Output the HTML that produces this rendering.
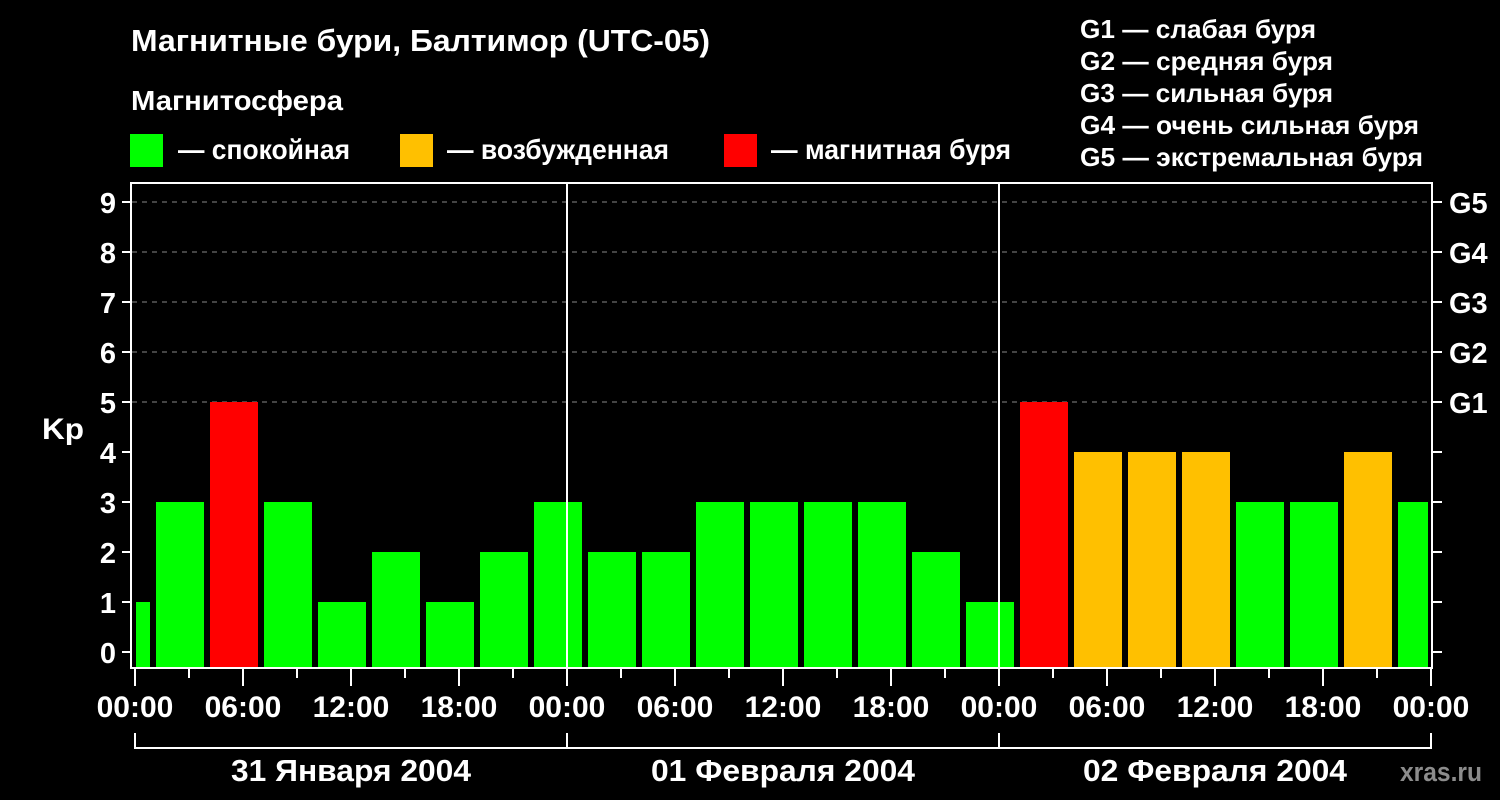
<!DOCTYPE html>
<html><head><meta charset="utf-8"><style>
html,body{margin:0;padding:0;background:#000;}
svg{display:block}
text{font-family:"Liberation Sans",Arial,sans-serif;font-weight:bold;fill:#fff}
</style></head><body>
<svg width="1500" height="800" viewBox="0 0 1500 800" xmlns="http://www.w3.org/2000/svg">
<rect width="1500" height="800" fill="#000"/>
<text x="131" y="51" font-size="31" textLength="579" lengthAdjust="spacingAndGlyphs">Магнитные бури, Балтимор (UTC-05)</text>
<text x="131" y="110" font-size="28" textLength="212" lengthAdjust="spacingAndGlyphs">Магнитосфера</text>
<rect x="130" y="134" width="33" height="33" fill="#00ff00"/>
<text x="178" y="159" font-size="28" textLength="172" lengthAdjust="spacingAndGlyphs">— спокойная</text>
<rect x="400" y="134" width="33" height="33" fill="#ffc000"/>
<text x="447" y="159" font-size="28" textLength="222" lengthAdjust="spacingAndGlyphs">— возбужденная</text>
<rect x="724" y="134" width="33" height="33" fill="#ff0000"/>
<text x="771" y="159" font-size="28" textLength="240" lengthAdjust="spacingAndGlyphs">— магнитная буря</text>
<g font-size="26">
<text x="1080" y="38" textLength="236" lengthAdjust="spacingAndGlyphs">G1 — слабая буря</text>
<text x="1080" y="70" textLength="253" lengthAdjust="spacingAndGlyphs">G2 — средняя буря</text>
<text x="1080" y="102" textLength="253" lengthAdjust="spacingAndGlyphs">G3 — сильная буря</text>
<text x="1080" y="134" textLength="339" lengthAdjust="spacingAndGlyphs">G4 — очень сильная буря</text>
<text x="1080" y="166" textLength="343" lengthAdjust="spacingAndGlyphs">G5 — экстремальная буря</text>
</g>
<g stroke="#888" stroke-width="1" stroke-dasharray="5,5">
<line x1="132" y1="202" x2="1432" y2="202"/><line x1="132" y1="252" x2="1432" y2="252"/>
<line x1="132" y1="302" x2="1432" y2="302"/><line x1="132" y1="352" x2="1432" y2="352"/>
<line x1="132" y1="402" x2="1432" y2="402"/>
</g>
<rect x="136" y="602" width="14" height="66" fill="#00ff00"/>
<rect x="156" y="502" width="48" height="166" fill="#00ff00"/>
<rect x="210" y="402" width="48" height="266" fill="#ff0000"/>
<rect x="264" y="502" width="48" height="166" fill="#00ff00"/>
<rect x="318" y="602" width="48" height="66" fill="#00ff00"/>
<rect x="372" y="552" width="48" height="116" fill="#00ff00"/>
<rect x="426" y="602" width="48" height="66" fill="#00ff00"/>
<rect x="480" y="552" width="48" height="116" fill="#00ff00"/>
<rect x="534" y="502" width="48" height="166" fill="#00ff00"/>
<rect x="588" y="552" width="48" height="116" fill="#00ff00"/>
<rect x="642" y="552" width="48" height="116" fill="#00ff00"/>
<rect x="696" y="502" width="48" height="166" fill="#00ff00"/>
<rect x="750" y="502" width="48" height="166" fill="#00ff00"/>
<rect x="804" y="502" width="48" height="166" fill="#00ff00"/>
<rect x="858" y="502" width="48" height="166" fill="#00ff00"/>
<rect x="912" y="552" width="48" height="116" fill="#00ff00"/>
<rect x="966" y="602" width="48" height="66" fill="#00ff00"/>
<rect x="1020" y="402" width="48" height="266" fill="#ff0000"/>
<rect x="1074" y="452" width="48" height="216" fill="#ffc000"/>
<rect x="1128" y="452" width="48" height="216" fill="#ffc000"/>
<rect x="1182" y="452" width="48" height="216" fill="#ffc000"/>
<rect x="1236" y="502" width="48" height="166" fill="#00ff00"/>
<rect x="1290" y="502" width="48" height="166" fill="#00ff00"/>
<rect x="1344" y="452" width="48" height="216" fill="#ffc000"/>
<rect x="1398" y="502" width="30" height="166" fill="#00ff00"/>
<g stroke="#fff" stroke-width="2" fill="none">
<rect x="131" y="183" width="1301" height="485"/>
<line x1="567" y1="183" x2="567" y2="668"/>
<line x1="999" y1="183" x2="999" y2="668"/>
</g>
<g stroke="#fff" stroke-width="2">
<line x1="122" y1="202" x2="131" y2="202"/><line x1="122" y1="252" x2="131" y2="252"/>
<line x1="122" y1="302" x2="131" y2="302"/><line x1="122" y1="352" x2="131" y2="352"/>
<line x1="122" y1="402" x2="131" y2="402"/><line x1="122" y1="452" x2="131" y2="452"/>
<line x1="122" y1="502" x2="131" y2="502"/><line x1="122" y1="552" x2="131" y2="552"/>
<line x1="122" y1="602" x2="131" y2="602"/><line x1="122" y1="652" x2="131" y2="652"/>
<line x1="1432" y1="202" x2="1442" y2="202"/><line x1="1432" y1="252" x2="1442" y2="252"/>
<line x1="1432" y1="302" x2="1442" y2="302"/><line x1="1432" y1="352" x2="1442" y2="352"/>
<line x1="1432" y1="402" x2="1442" y2="402"/><line x1="1432" y1="452" x2="1442" y2="452"/>
<line x1="1432" y1="502" x2="1442" y2="502"/><line x1="1432" y1="552" x2="1442" y2="552"/>
<line x1="1432" y1="602" x2="1442" y2="602"/><line x1="1432" y1="652" x2="1442" y2="652"/>
<line x1="135" y1="668" x2="135" y2="686"/><line x1="243" y1="668" x2="243" y2="686"/>
<line x1="351" y1="668" x2="351" y2="686"/><line x1="459" y1="668" x2="459" y2="686"/>
<line x1="567" y1="668" x2="567" y2="686"/><line x1="675" y1="668" x2="675" y2="686"/>
<line x1="783" y1="668" x2="783" y2="686"/><line x1="891" y1="668" x2="891" y2="686"/>
<line x1="999" y1="668" x2="999" y2="686"/><line x1="1107" y1="668" x2="1107" y2="686"/>
<line x1="1215" y1="668" x2="1215" y2="686"/><line x1="1323" y1="668" x2="1323" y2="686"/>
<line x1="1431" y1="668" x2="1431" y2="686"/>
<line x1="189" y1="668" x2="189" y2="678"/><line x1="297" y1="668" x2="297" y2="678"/>
<line x1="405" y1="668" x2="405" y2="678"/><line x1="513" y1="668" x2="513" y2="678"/>
<line x1="621" y1="668" x2="621" y2="678"/><line x1="729" y1="668" x2="729" y2="678"/>
<line x1="837" y1="668" x2="837" y2="678"/><line x1="945" y1="668" x2="945" y2="678"/>
<line x1="1053" y1="668" x2="1053" y2="678"/><line x1="1161" y1="668" x2="1161" y2="678"/>
<line x1="1269" y1="668" x2="1269" y2="678"/><line x1="1377" y1="668" x2="1377" y2="678"/>
<line x1="135" y1="733" x2="135" y2="748"/><line x1="567" y1="733" x2="567" y2="748"/>
<line x1="999" y1="733" x2="999" y2="748"/><line x1="1431" y1="733" x2="1431" y2="748"/>
<line x1="134" y1="748" x2="1432" y2="748"/>
</g>
<g font-size="29" text-anchor="end">
<text x="116" y="213">9</text><text x="116" y="263">8</text><text x="116" y="313">7</text>
<text x="116" y="363">6</text><text x="116" y="413">5</text><text x="116" y="463">4</text>
<text x="116" y="513">3</text><text x="116" y="563">2</text><text x="116" y="613">1</text>
<text x="116" y="663">0</text>
</g>
<text x="42" y="439" font-size="30" textLength="42" lengthAdjust="spacingAndGlyphs">Kp</text>
<g font-size="29">
<text x="1449" y="213">G5</text><text x="1449" y="263">G4</text><text x="1449" y="313">G3</text>
<text x="1449" y="363">G2</text><text x="1449" y="413">G1</text>
</g>
<g font-size="30" text-anchor="middle">
<text x="135" y="717">00:00</text><text x="243" y="717">06:00</text><text x="351" y="717">12:00</text>
<text x="459" y="717">18:00</text><text x="567" y="717">00:00</text><text x="675" y="717">06:00</text>
<text x="783" y="717">12:00</text><text x="891" y="717">18:00</text><text x="999" y="717">00:00</text>
<text x="1107" y="717">06:00</text><text x="1215" y="717">12:00</text><text x="1323" y="717">18:00</text>
<text x="1431" y="717">00:00</text>
</g>
<g font-size="31" text-anchor="middle">
<text x="351" y="781" textLength="240" lengthAdjust="spacingAndGlyphs">31 Января 2004</text>
<text x="783" y="781" textLength="264" lengthAdjust="spacingAndGlyphs">01 Февраля 2004</text>
<text x="1215" y="781" textLength="264" lengthAdjust="spacingAndGlyphs">02 Февраля 2004</text>
</g>
<text x="1400" y="781" font-size="27" style="fill:#8c8c8c" textLength="82" lengthAdjust="spacingAndGlyphs">xras.ru</text>
</svg>
</body></html>
